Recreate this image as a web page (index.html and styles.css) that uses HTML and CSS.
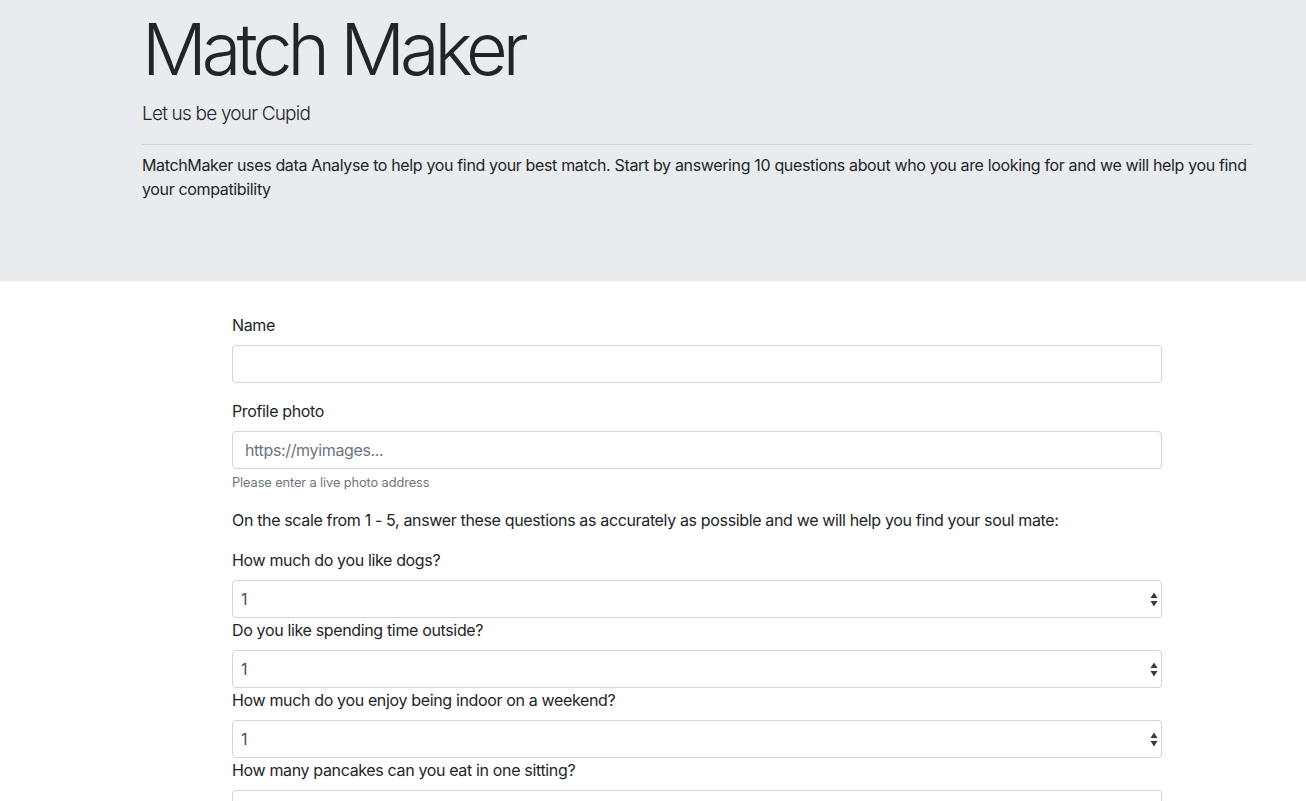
FILE: index.html
```html
<!DOCTYPE html>
<html lang="en">
<head>
<meta charset="utf-8">
<title>Match Maker</title>
<link rel="stylesheet" href="styles.css">
</head>
<body>
<header class="hero">
  <div class="hero-inner">
    <h1 class="title">Match Maker</h1>
    <p class="lead">Let us be your Cupid</p>
    <hr class="rule">
    <p class="intro">MatchMaker uses data Analyse to help you find your best match. Start by answering 10 questions about who you are looking for and we will help you find your compatibility</p>
  </div>
</header>
<main class="main">
  <form class="form">
    <div class="group">
      <label class="label" for="name">Name</label>
      <input class="control" id="name" type="text">
    </div>
    <div class="group">
      <label class="label" for="photo">Profile photo</label>
      <input class="control" id="photo" type="text" placeholder="https://myimages...">
      <small class="help">Please enter a live photo address</small>
    </div>
    <p class="scale">On the scale from 1 - 5, answer these questions as accurately as possible and we will help you find your soul mate:</p>

    <label class="label" for="q1">How much do you like dogs?</label>
    <div class="select-wrap">
      <select class="select" id="q1"><option>1</option><option>2</option><option>3</option><option>4</option><option>5</option></select>
      <svg class="arrows" width="8" height="15" viewBox="0 0 8 15"><path d="M4 0.5 L7.5 6 L0.5 6 Z" fill="#3a3a3a"/><path d="M0.5 9 L7.5 9 L4 14.5 Z" fill="#3a3a3a"/></svg>
    </div>
    <label class="label" for="q2">Do you like spending time outside?</label>
    <div class="select-wrap">
      <select class="select" id="q2"><option>1</option><option>2</option><option>3</option><option>4</option><option>5</option></select>
      <svg class="arrows" width="8" height="15" viewBox="0 0 8 15"><path d="M4 0.5 L7.5 6 L0.5 6 Z" fill="#3a3a3a"/><path d="M0.5 9 L7.5 9 L4 14.5 Z" fill="#3a3a3a"/></svg>
    </div>
    <label class="label" for="q3">How much do you enjoy being indoor on a weekend?</label>
    <div class="select-wrap">
      <select class="select" id="q3"><option>1</option><option>2</option><option>3</option><option>4</option><option>5</option></select>
      <svg class="arrows" width="8" height="15" viewBox="0 0 8 15"><path d="M4 0.5 L7.5 6 L0.5 6 Z" fill="#3a3a3a"/><path d="M0.5 9 L7.5 9 L4 14.5 Z" fill="#3a3a3a"/></svg>
    </div>
    <label class="label" for="q4">How many pancakes can you eat in one sitting?</label>
    <div class="select-wrap">
      <select class="select" id="q4"><option>1</option><option>2</option><option>3</option><option>4</option><option>5</option></select>
      <svg class="arrows" width="8" height="15" viewBox="0 0 8 15"><path d="M4 0.5 L7.5 6 L0.5 6 Z" fill="#3a3a3a"/><path d="M0.5 9 L7.5 9 L4 14.5 Z" fill="#3a3a3a"/></svg>
    </div>
  </form>
</main>
</body>
</html>
```

FILE: styles.css
```css
* { box-sizing: border-box; }
html, body { margin: 0; padding: 0; }
body {
  font-family: Inter, "Noto Sans", "Liberation Sans", sans-serif;
  font-size: 16px;
  line-height: 24px;
  letter-spacing: -0.35px;
  color: #212529;
  background: #fff;
}
.hero {
  background: #e9ecef;
  padding: 6px 54px 64px 142px;
  margin-bottom: 32px;
}
.hero-inner { width: 1110px; }
.title {
  font-size: 72px;
  line-height: 86px;
  font-weight: 300;
  margin: 0 0 7px;
  letter-spacing: -5px;
}
.lead {
  font-size: 19px;
  line-height: 30px;
  font-weight: 300;
  margin: 0;
  letter-spacing: -0.8px;
}
.rule {
  border: 0;
  border-top: 1px solid rgba(0,0,0,0.1);
  margin: 15px 0 8px;
  height: 0;
}
.intro { margin: 0 0 16px; }
.main { padding: 0 144px 40px 232px; }
.form { width: 930px; }
.group { margin-bottom: 16px; }
.label {
  display: block;
  margin-bottom: 8px;
}
.control {
  display: block;
  width: 100%;
  height: 38px;
  padding: 6px 12px;
  font: inherit;
  letter-spacing: -0.35px;
  color: #495057;
  background: #fff;
  border: 1px solid #ced4da;
  border-radius: 4px;
  outline: none;
}
.control::placeholder { color: #6c757d; opacity: 1; }
.help {
  display: block;
  margin-top: 4px;
  font-size: 12.8px;
  line-height: 19.2px;
  letter-spacing: -0.1px;
  color: #6c757d;
}
.scale { margin: 0 0 16px; }
.select-wrap { position: relative; }
.select {
  display: block;
  width: 100%;
  height: 38px;
  padding: 0 24px 0 8px;
  font: inherit;
  color: #495057;
  background: #fff;
  border: 1px solid #ced4da;
  border-radius: 4px;
  -webkit-appearance: none;
  appearance: none;
  outline: none;
}
.arrows {
  position: absolute;
  right: 4px;
  top: 12px;
  pointer-events: none;
}
```
